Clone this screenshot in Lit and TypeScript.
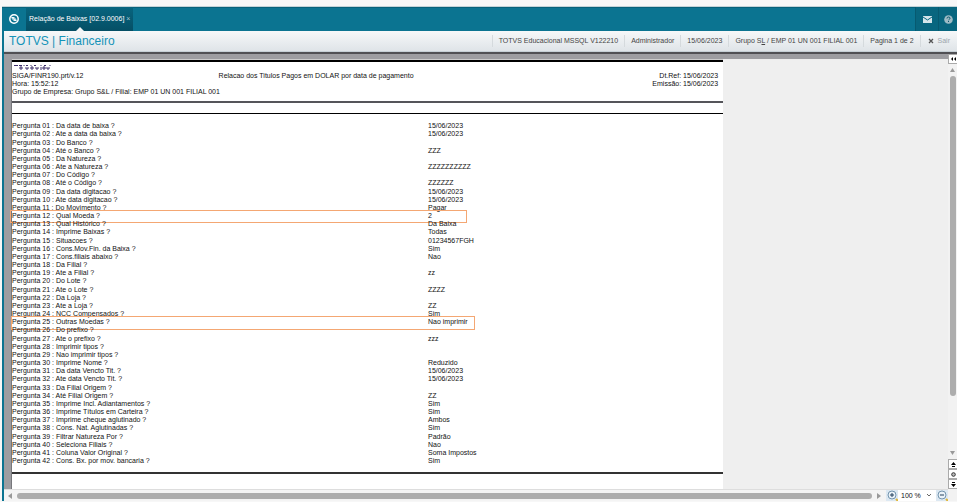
import { LitElement, html, css, svg } from "lit";
import { customElement } from "lit/decorators.js";
import { classMap } from "lit/directives/class-map.js";

interface Question {
  label: string;
  answer: string;
  mark?: "narrow" | "wide";
}

const rows: Array<[string, string]> = [
  ["Da data de baixa ?", "15/06/2023"],
  ["Ate a data da baixa ?", "15/06/2023"],
  ["Do Banco ?", ""],
  ["Até o Banco ?", "ZZZ"],
  ["Da Natureza ?", ""],
  ["Ate a Natureza ?", "ZZZZZZZZZZ"],
  ["Do Código ?", ""],
  ["Até o Código ?", "ZZZZZZ"],
  ["Da data digitacao ?", "15/06/2023"],
  ["Ate data digitacao ?", "15/06/2023"],
  ["Do Movimento ?", "Pagar"],
  ["Qual Moeda ?", "2"],
  ["Qual Histórico ?", "Da Baixa"],
  ["Imprime Baixas ?", "Todas"],
  ["Situacoes ?", "01234567FGH"],
  ["Cons.Mov.Fin. da Baixa ?", "Sim"],
  ["Cons.filiais abaixo ?", "Nao"],
  ["Da Filial ?", ""],
  ["Ate a Filial ?", "zz"],
  ["Do Lote ?", ""],
  ["Ate o Lote ?", "ZZZZ"],
  ["Da Loja ?", ""],
  ["Ate a Loja ?", "ZZ"],
  ["NCC Compensados ?", "Sim"],
  ["Outras Moedas ?", "Nao imprimir"],
  ["Do prefixo ?", ""],
  ["Ate o prefixo ?", "zzz"],
  ["Imprimir tipos ?", ""],
  ["Nao imprimir tipos ?", ""],
  ["Imprime Nome ?", "Reduzido"],
  ["Da data Vencto Tit. ?", "15/06/2023"],
  ["Ate data Vencto Tit. ?", "15/06/2023"],
  ["Da Filial Origem ?", ""],
  ["Até Filial Origem ?", "ZZ"],
  ["Imprime Incl. Adiantamentos ?", "Sim"],
  ["Imprime Títulos em Carteira ?", "Sim"],
  ["Imprime cheque aglutinado ?", "Ambos"],
  ["Cons. Nat. Aglutinadas ?", "Sim"],
  ["Filtrar Natureza Por ?", "Padrão"],
  ["Seleciona Filiais ?", "Nao"],
  ["Coluna Valor Original ?", "Soma Impostos"],
  ["Cons. Bx. por mov. bancaria ?", "Sim"],
];

const questions: Question[] = rows.map(([text, answer], i) => ({
  label: `Pergunta ${String(i + 1).padStart(2, "0")} : ${text}`,
  answer,
  mark: i === 11 ? "narrow" : i === 24 ? "wide" : undefined,
}));

const zoomIcon = (plus: boolean) => html`<svg width="11" height="11" viewBox="0 0 11 11">
  <circle cx="5" cy="5" r="4" fill="#eaf2f8" stroke="#7394ad" />
  <path d="M3 5h4" stroke="#23415e" />
  ${plus ? svg`<path d="M5 3v4" stroke="#23415e" />` : ""}
  <path d="M9 9l2 2" stroke="#e0b73a" stroke-width="2" />
</svg>`;

@customElement("app-root")
export class AppRoot extends LitElement {
  static styles = css`
    :host {
      display: block;
      font: 7px/8px "Liberation Sans", Arial, sans-serif;
      color: #111;
    }
    * { box-sizing: border-box; }
    button, select {
      font: inherit;
      color: inherit;
      background: none;
      border: 0;
      border-radius: 0;
      margin: 0;
      padding: 0;
      display: flex;
      align-items: center;
      justify-content: center;
    }
    svg { display: block; }
    .window {
      min-height: 100vh;
      display: flex;
      flex-direction: column;
      background: #f7f7f7;
      padding: 6px 6px 1px 2px;
      box-shadow: inset -6px 0 #fff;
    }
    .tabs {
      height: 25px;
      display: flex;
      background: #0b7491;
      border-top: 1px solid #c3d3d8;
      box-shadow: inset 0 1px #07627b;
      color: #fff;
    }
    .home { width: 24px; }
    .tab {
      position: relative;
      display: flex;
      align-items: center;
      gap: 2px;
      padding: 0 3px;
      background: linear-gradient(#08657f, #054f65);
    }
    .tab::after {
      content: "";
      position: absolute;
      left: 50%;
      bottom: 0;
      margin-left: -4px;
      border: 4px solid transparent;
      border-top: 0;
      border-bottom-color: #f3f5f6;
    }
    .close { color: #a5c8d2; }
    .spacer { flex: 1; }
    .tool { width: 23px; background: #08667f; border-left: 1px solid #075a70; }
    .last { width: 19px; }
    .frame {
      flex: 1;
      display: flex;
      flex-direction: column;
      border-left: 2px solid #0b7491;
    }
    .header {
      height: 21px;
      display: flex;
      align-items: center;
      background: linear-gradient(#f6f8f9, #dfe4e8);
      border-bottom: 1px solid #c6d0d6;
      color: #444;
    }
    h1 {
      flex: 1;
      margin: 0;
      padding-left: 5px;
      font-size: 12px;
      line-height: 16px;
      font-weight: 400;
      color: #1593b8;
    }
    .info {
      padding: 2px 6px;
      border-left: 1px solid #d5dadd;
      white-space: nowrap;
    }
    .exit { gap: 4px; color: #9aa4ab; padding: 2px 7px; border-left: 1px solid #d5dadd; }
    .viewer {
      flex: 1;
      display: flex;
      border-top: 2px solid #505054;
      background: #efefef;
    }
    .canvas { flex: 1; display: flex; flex-direction: column; }
    .desk {
      flex: 1;
      display: flex;
      padding: 5px 0 0 7px;
      background: linear-gradient(#9d9da1, #9d9da1) top / 100% 5px no-repeat,
        linear-gradient(#9d9da1, #9d9da1) left / 7px 100% no-repeat;
    }
    .paper {
      width: 76%;
      background: #fff;
      border-left: 1px solid #77777b;
      border-top: 1px solid #ccc;
    }
    .head {
      border-top: 2px solid #000;
      border-bottom: 2px solid #55555a;
      padding: 2px 5px 6px 0;
      height: 43px;
    }
    .logo { height: 8px; }
    .headline { display: grid; grid-template-columns: 1fr auto 1fr; }
    .right { text-align: right; }
    .title { padding-right: 98px; }
    .rule { border-top: 1px solid #000; margin-top: 10px; height: 9px; }
    table { width: 100%; border-collapse: collapse; table-layout: fixed; }
    td, th { padding: 0; height: 8px; font-weight: 400; text-align: left; white-space: nowrap; }
    th { width: 58.5%; }
    tr:nth-child(6n + 3) > * { padding-top: 1px; height: 9px; }
    tr { position: relative; }
    .mark::after {
      content: "";
      position: absolute;
      left: -2px;
      top: -2px;
      width: 64%;
      height: 11px;
      border: 1px solid #f4a773;
    }
    .wide::after { left: -1px; width: 65%; height: 12px; }
    .end { border-top: 2px solid #333; margin-top: 7px; }
    .hscroll {
      height: 12px;
      display: flex;
      align-items: center;
      gap: 5px;
      background: #f4f4f4;
      border-top: 1px solid #ddd;
      padding-left: 4px;
    }
    .hthumb { flex: 1; height: 6px; border-radius: 3px; background: #adadad; }
    .zoom { display: flex; align-items: center; background: #fff; height: 11px; }
    .zoom button { width: 12px; height: 11px; background: #dce8f2; }
    .pick { display: flex; position: relative; }
    .pick svg { position: absolute; right: 4px; top: 2px; pointer-events: none; }
    select { appearance: none; width: 38px; height: 11px; padding-left: 3px; }
    .vscroll {
      width: 9px;
      display: flex;
      flex-direction: column;
      align-items: center;
      gap: 4px;
      background: #f2f2f2;
    }
    .vthumb { width: 6px; height: 320px; border-radius: 3px; background: #adadad; }
    .step { width: 9px; height: 10px; background: #fff; border: 1px solid #aaa; border-right: 0; }
    .steps { display: flex; flex-direction: column; padding-bottom: 12px; }
  `;

  render() {
    return html`<div class="window">
      <nav class="tabs">
        <button class="home" aria-label="Início">
          <svg width="10" height="10" viewBox="0 0 10 10" fill="none" stroke="#fff">
            <circle cx="5" cy="5" r="4.2" stroke-width="1.5" />
            <path d="M2.4 3.4L5 4M7.6 6.6L5 6" stroke-width="1.5" />
            <circle cx="5" cy="5" r="1.2" />
          </svg>
        </button>
        <div class="tab">
          <span>Relação de Baixas [02.9.0006]</span>
          <button class="close" aria-label="Fechar aba">×</button>
        </div>
        <span class="spacer"></span>
        <button class="tool" aria-label="Mensagens">
          <svg width="9" height="7" viewBox="0 0 9 7">
            <rect width="9" height="7" fill="#d5e5ea" />
            <path d="M0 1l4.5 3L9 1" fill="none" stroke="#08667f" />
          </svg>
        </button>
        <button class="tool last" aria-label="Ajuda">
          <svg width="9" height="9" viewBox="0 0 9 9">
            <circle cx="4.5" cy="4.5" r="4.3" fill="#9dbbc5" />
            <path d="M3 3.5q0-1.500 1.500-1.500T6 3.400Q6 4 4.500 5M4.500 6v1" fill="none" stroke="#08566c" />
          </svg>
        </button>
      </nav>
      <div class="frame">
        <header class="header">
          <h1>TOTVS | Financeiro</h1>
          <span class="info">TOTVS Educacional MSSQL V122210</span>
          <span class="info">Administrador</span>
          <span class="info">15/06/2023</span>
          <span class="info">Grupo S<u>L</u> / EMP 01 UN 001 FILIAL 001</span>
          <span class="info">Pagina 1 de 2</span>
          <button class="exit">
            <svg width="6" height="6" viewBox="0 0 6 6"><path d="M1 1l4 4M5 1L1 5" stroke="#555" stroke-width="1.3" /></svg>
            Sair
          </button>
        </header>
        <div class="viewer">
          <div class="canvas">
            <div class="desk">
              <main class="paper">
                <div class="head">
                  <svg class="logo" width="42" height="8" viewBox="0 0 42 8" fill="none" stroke="#3d2f6b">
                    <path d="M2 1.500h4M7 1.500h3M8 3v2h2v-2zM12 1v1M14 1.500h2M14 3v2h2v-2M19 1v1M19 3v2h2v-2zM22 1.500h2M24 3v2h2v-2M29 1v1M29 3v3M31 3v2h2v-2zM32 1.500h2M35 3v2h2v-2M38 1v1" />
                  </svg>
                  <div class="headline">
                    <span>SIGA/FINR190.prt/v.12</span>
                    <span class="title">Relacao dos Titulos Pagos em DOLAR por data de pagamento</span>
                    <span class="right">Dt.Ref: 15/06/2023</span>
                    <span>Hora: 15:52:12</span>
                    <span></span>
                    <span class="right">Emissão: 15/06/2023</span>
                  </div>
                  <div>Grupo de Empresa: Grupo S&amp;L / Filial: EMP 01 UN 001 FILIAL 001</div>
                </div>
                <div class="rule"></div>
                <table>
                  <tbody>
                    ${questions.map(
                      (q) => html`<tr class=${classMap({ mark: !!q.mark, wide: q.mark === "wide" })}>
                        <th scope="row">${q.label}</th>
                        <td>${q.answer}</td>
                      </tr>`
                    )}
                  </tbody>
                </table>
                <div class="end"></div>
              </main>
            </div>
            <div class="hscroll">
              <svg width="4" height="6" viewBox="0 0 4 6"><path d="M4 0v6L0 3z" fill="#999" /></svg>
              <div class="hthumb"></div>
              <svg width="4" height="6" viewBox="0 0 4 6"><path d="M0 0v6l4-3z" fill="#999" /></svg>
              <div class="zoom">
                <button aria-label="Ampliar">${zoomIcon(true)}</button>
                <span class="pick">
                  <select aria-label="Zoom"><option>100 %</option></select>
                  <svg width="6" height="6" viewBox="0 0 6 6"><path d="M1 2l2 2 2-2" fill="none" stroke="#666" /></svg>
                </span>
                <button aria-label="Reduzir">${zoomIcon(false)}</button>
              </div>
            </div>
          </div>
          <div class="vscroll">
            <button class="step" aria-label="Recolher">
              <svg width="5" height="4" viewBox="0 0 5 4"><path d="M2 0v4L0 2zM5 0v4L3 2z" /></svg>
            </button>
            <svg width="5" height="4" viewBox="0 0 5 4"><path d="M0 4h5L2.500 0z" fill="#999" /></svg>
            <div class="vthumb"></div>
            <span class="spacer"></span>
            <svg width="5" height="4" viewBox="0 0 5 4"><path d="M0 0h5L2.500 4z" fill="#999" /></svg>
            <div class="steps">
              <button class="step" aria-label="Página anterior">
                <svg width="5" height="5" viewBox="0 0 5 5"><path d="M0 3l2.500-3L5 3zM1 4h3v1H1z" /></svg>
              </button>
              <button class="step" aria-label="Ir para página">
                <svg width="5" height="5" viewBox="0 0 5 5"><circle cx="2.5" cy="2.5" r="1.8" fill="#bbb" stroke="#333" /></svg>
              </button>
              <button class="step" aria-label="Próxima página">
                <svg width="5" height="5" viewBox="0 0 5 5"><path d="M0 2l2.500 3L5 2zM1 0h3v1H1z" /></svg>
              </button>
            </div>
          </div>
        </div>
      </div>
    </div>`;
  }
}
